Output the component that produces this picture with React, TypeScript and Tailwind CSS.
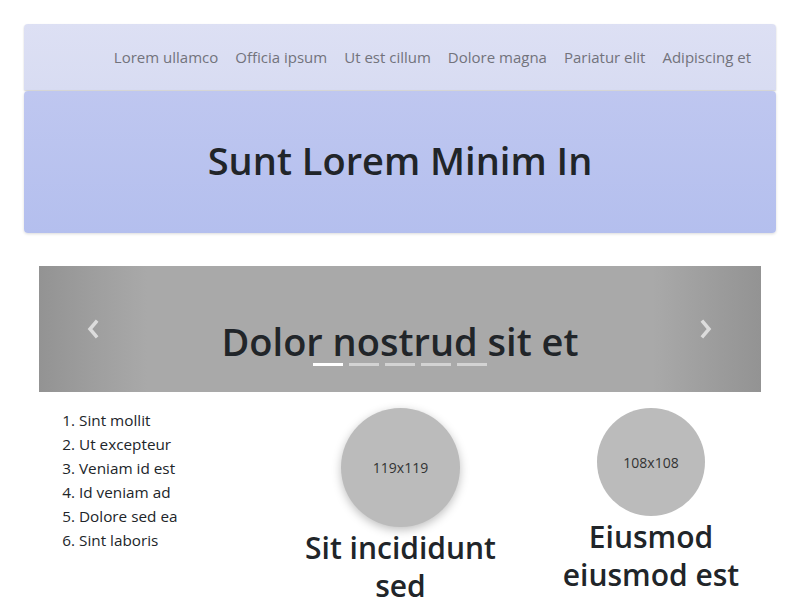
import React from "react";

const font = { fontFamily: '"Open Sans", "Noto Sans", sans-serif' };

function Chevron({ dir }: { dir: "left" | "right" }) {
  return (
    <svg width="14" height="20" viewBox="0 0 14 20" className="block">
      <path
        d={dir === "left" ? "M10 3 L4 10 L10 17" : "M4 3 L10 10 L4 17"}
        fill="none"
        stroke="#dcdcdc"
        strokeWidth="3.5"
        strokeLinecap="square"
      />
    </svg>
  );
}

export default function App() {
  const links = [
    "Lorem ullamco",
    "Officia ipsum",
    "Ut est cillum",
    "Dolore magna",
    "Pariatur elit",
    "Adipiscing et",
  ];
  const items = [
    "Sint mollit",
    "Ut excepteur",
    "Veniam id est",
    "Id veniam ad",
    "Dolore sed ea",
    "Sint laboris",
  ];
  return (
    <div className="min-h-[600px] bg-white text-[#212529]" style={font}>
      <div className="mx-[24px] pt-[24px]">
        <nav className="flex h-[66px] items-center justify-end rounded-t-[4px] bg-gradient-to-b from-[#dde0f4] to-[#d8dcf2] pr-[16.5px] shadow-[0_1px_2px_rgba(0,0,0,0.2)]">
          <div className="flex">
            {links.map((l) => (
              <span key={l} className="px-[8.5px] text-[15px] leading-[24px] text-[#72737c]">
                {l}
              </span>
            ))}
          </div>
        </nav>
        <div className="mt-[1px] flex h-[142px] items-center justify-center rounded-[4px] bg-gradient-to-b from-[#bfc7f0] to-[#b4bfee] pb-[4px] shadow-[0_1px_3px_rgba(0,0,0,0.15)]">
          <h1 className="text-[38px] font-semibold leading-[48px] text-[#212529]">
            Sunt Lorem Minim In
          </h1>
        </div>

        <div className="mx-[15px] mt-[33px]">
          <div className="relative flex h-[126px] items-end justify-center bg-[#a9a9a9]">
            <div className="absolute inset-y-0 left-0 w-[108px] bg-gradient-to-r from-[#939393] to-transparent" />
            <div className="absolute inset-y-0 right-0 w-[108px] bg-gradient-to-l from-[#939393] to-transparent" />
            <div className="absolute left-[47px] top-[53px]">
              <Chevron dir="left" />
            </div>
            <div className="absolute right-[48px] top-[53px]">
              <Chevron dir="right" />
            </div>
            <div className="relative flex flex-col items-center pb-[29px]">
              <h3 className="text-[38px] font-semibold leading-[44px] text-[#212529]">
                Dolor nostrud sit et
              </h3>
            </div>
            <div className="absolute bottom-[26px] left-0 right-0 flex justify-center gap-[6px]">
              <span className="h-[3px] w-[30px] bg-white" />
              <span className="h-[3px] w-[30px] bg-[#d3d3d3]" />
              <span className="h-[3px] w-[30px] bg-[#d3d3d3]" />
              <span className="h-[3px] w-[30px] bg-[#d3d3d3]" />
              <span className="h-[3px] w-[30px] bg-[#d3d3d3]" />
            </div>
          </div>

          <div className="mt-[16px] grid grid-cols-[241px_241px_260px]">
            <ol className="list-decimal pl-[40px] text-[15.3px] leading-[24px]">
              {items.map((i) => (
                <li key={i}>{i}</li>
              ))}
            </ol>
            <div className="flex flex-col items-center px-[15px] text-center">
              <div className="flex h-[119px] w-[119px] items-center justify-center rounded-full bg-[#bbbbbb] text-[14px] text-[#333] shadow-[0_3px_10px_rgba(0,0,0,0.25)]">
                119x119
              </div>
              <h2 className="pt-[2px] text-[30px] font-semibold leading-[38px]">
                Sit incididunt sed
              </h2>
            </div>
            <div className="flex flex-col items-center px-[15px] text-center">
              <div className="flex h-[108px] w-[108px] items-center justify-center rounded-full bg-[#bbbbbb] pt-[1px] text-[14px] text-[#333]">
                108x108
              </div>
              <h2 className="pt-[2px] text-[30px] font-semibold leading-[38px]">
                Eiusmod eiusmod est
              </h2>
            </div>
          </div>
        </div>
      </div>
    </div>
  );
}
